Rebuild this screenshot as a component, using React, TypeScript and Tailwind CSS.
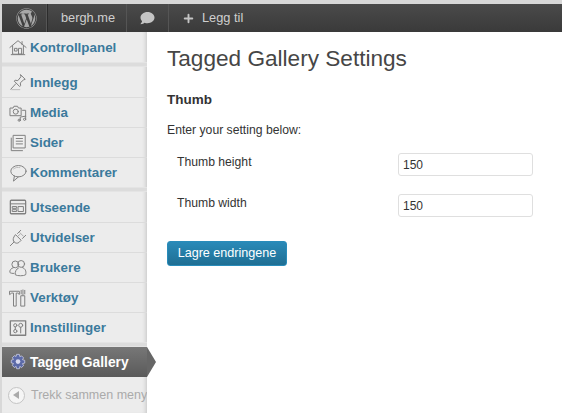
import type { ReactNode } from "react";
import { FaWordpress, FaComment } from "react-icons/fa";
import { Plus } from "lucide-react";

const stroke = {
  fill: "none",
  stroke: "#808080",
  strokeWidth: 1.1,
  strokeLinejoin: "round" as const,
  strokeLinecap: "round" as const,
};

function MenuIcon({ children }: { children: ReactNode }) {
  return (
    <svg viewBox="0 0 20 20" className="h-[18px] w-[18px] shrink-0" {...stroke}>
      {children}
    </svg>
  );
}

const icons = {
  home: (
    <MenuIcon>
      <path d="M1 10.500 10 3l9 7.500M4 8.500V18h12V8.500M14.500 4v3.500M6.500 11.500h2.500v3H6.500zM11 11.500h3V18h-3z" />
      <path d="M2.500 18.500h15" />
    </MenuIcon>
  ),
  pin: (
    <MenuIcon>
      <path d="m13 2 5 5-2 .8-3.500 3.200.5 3-1.200 1-6-6 1-1 3 .5L13 4.500z" />
      <path d="m7.500 12-5.500 6" />
      <path d="M3 18.500h9" stroke="#bbb" />
    </MenuIcon>
  ),
  media: (
    <MenuIcon>
      <path d="M1.500 4.500h3l1-2h4l1 2h3v8.500h-12z" />
      <circle cx="7.500" cy="8.500" r="2.800" />
      <path d="M15 7h3.500v7M12.500 18.500v-4l6-1v4" />
      <circle cx="11.300" cy="18" r="1.200" />
      <circle cx="17.300" cy="17" r="1.200" />
    </MenuIcon>
  ),
  pages: (
    <MenuIcon>
      <path d="M5 1.500h13v14H5z" fill="#efefef" />
      <path d="M2.500 4.500v14H15" />
      <path d="M8 5h7M8 8h7M8 11h7" />
    </MenuIcon>
  ),
  comments: (
    <MenuIcon>
      <ellipse cx="10.500" cy="8" rx="8.500" ry="6.300" />
      <path d="M6 13.500 5 19l5.500-4.700" />
      <path d="M5 5.500c2-1.800 5-2 7-1.500" stroke="#bbb" />
    </MenuIcon>
  ),
  appearance: (
    <MenuIcon>
      <rect x="1.500" y="2.500" width="17" height="15" rx="1" strokeWidth="1.400" />
      <path d="M1.500 6.500h17M4 9.500h4.500v2H4zM4 13h4.500v2H4zM10.500 9.500H16V15h-5.500z" />
    </MenuIcon>
  ),
  plugins: (
    <MenuIcon>
      <path d="m7.500 6.500 6 6-2.500 2.500c-2 1.300-4 .8-5.200-.5s-1.600-3.200-.6-5.200zM5.500 14.500 1.500 18.500M9.500 5l3.500-3.500M15 10.500 18.500 7" />
      <path d="m12 4 4 4M10 8l2-2" stroke="#aaa" />
    </MenuIcon>
  ),
  users: (
    <MenuIcon>
      <circle cx="7" cy="6" r="3.800" />
      <circle cx="13.500" cy="5.500" r="3.800" />
      <path d="M5 9.500c-3 1-4.500 3-4 5.500 1 .8 3 1.200 4.500 1M15 9.500c3 1 4.500 4 3.500 8-2 1.500-9.500 1.500-11.500 0-.6-3 1-6.500 3.500-7.500" />
    </MenuIcon>
  ),
  tools: (
    <MenuIcon>
      <path d="M1 2.500h10.500v3.500l-2-1.500H8V19H5V4.500H3l-2 1.500z" />
      <path d="M15.500 1v6M13.500 7.500h4V19h-4z" />
      <path d="M13.500 1.500v4M17.500 1.500v4" />
    </MenuIcon>
  ),
  settings: (
    <MenuIcon>
      <rect x="1.500" y="2" width="17" height="16" strokeWidth="1.500" />
      <circle cx="7" cy="7" r="1.800" />
      <circle cx="7" cy="13.500" r="1.800" />
      <path d="M7 8.800v2.900" />
      <circle cx="13" cy="7" r="2.200" />
      <path d="M13 9.200V15.500" />
    </MenuIcon>
  ),
};

const groups = [
  [{ label: "Kontrollpanel", icon: icons.home }],
  [
    { label: "Innlegg", icon: icons.pin },
    { label: "Media", icon: icons.media },
    { label: "Sider", icon: icons.pages },
    { label: "Kommentarer", icon: icons.comments },
  ],
  [
    { label: "Utseende", icon: icons.appearance },
    { label: "Utvidelser", icon: icons.plugins },
    { label: "Brukere", icon: icons.users },
    { label: "Verktøy", icon: icons.tools },
    { label: "Innstillinger", icon: icons.settings },
  ],
];

function Separator() {
  return <div className="h-[5px] border-y border-[#e4e4e4] bg-[#dcdcdc]" />;
}

function SettingRow({ label }: { label: string }) {
  return (
    <div className="flex items-start">
      <div className="w-[231px] pl-[10px] pt-[1px] text-[12.2px] leading-[16px]">{label}</div>
      <input
        readOnly
        value="150"
        className="h-[23px] w-[135px] rounded-[3px] border border-[#dfdfdf] bg-white px-[4px] text-[12px] text-[#333] outline-none"
      />
    </div>
  );
}

export default function App() {
  return (
    <div className="flex h-[413px] w-[562px] flex-col overflow-hidden bg-[#d8d8d8] pt-[4px] pl-[2px] font-['Liberation_Sans',Arial,sans-serif]">
      {/* Admin bar */}
      <header className="flex h-[28px] shrink-0 bg-gradient-to-b from-[#4a4a4a] to-[#3a3a3a] text-[12.8px] text-[#cfcfcf]">
        <div className="flex w-[45px] items-center justify-center border-r border-[#555]">
          <FaWordpress className="ml-[4px] h-[21px] w-[21px] text-[#a8a8a8]" />
        </div>
        <div className="flex w-[80px] items-center justify-center border-x border-x-[#2c2c2c] border-r-[#555] pl-[2px]">bergh.me</div>
        <div className="flex w-[42px] items-center justify-center border-r border-[#555]">
          <FaComment className="h-[14px] w-[15px] text-[#c4c4c4]" />
        </div>
        <div className="flex items-center gap-[7px] pl-[13px]">
          <Plus className="h-[13px] w-[13px] text-[#c4c4c4]" strokeWidth={3.5} />
          Legg til
        </div>
        <div className="flex-1" />
      </header>

      <div className="flex min-h-0 flex-1">
        {/* Side menu */}
        <aside className="w-[145px] shrink-0 bg-[#ececec] shadow-[inset_-4px_0_4px_-3px_#c4c4c4]">
          {groups.map((group, i) => (
            <div key={i}>
              {group.map((item, j) => (
                <div
                  key={item.label}
                  className={
                    "flex h-[30px] items-center gap-[4px] pl-[7px] text-[13.4px] font-bold text-[#3b7a9c] " +
                    (j > 0 ? "border-t border-[#dcdcdc]" : "")
                  }
                >
                  {item.icon}
                  <span className="-ml-px pt-[2px]">{item.label}</span>
                </div>
              ))}
              <Separator />
            </div>
          ))}
          <div className="relative flex h-[30px] items-center gap-[3px] bg-gradient-to-b from-[#777] to-[#5a5a5a] pl-[7px] text-[13.8px] font-bold text-white">
            <svg viewBox="0 0 20 20" className="h-[18px] w-[18px] shrink-0">
              <path
                d="M8.500 1.500h3l.5 2.500 2-.8 2.200 2.200-1.200 2 2.500.8v3l-2.500.6 1.200 2.200-2.200 2.100-2-1.200-.5 2.600h-3l-.6-2.600-2 1.200L3.700 13.800l1.200-2.200-2.400-.6V8l2.400-.8-1.200-2 2.200-2.200 2 .8z"
                fill="#5c6aa8"
                stroke="#d8daf0"
                strokeWidth="0.800"
              />
              <circle cx="10" cy="9.500" r="2.600" fill="#d8daf0" />
            </svg>
            <span className="pt-[2px]">Tagged Gallery</span>
            <span className="absolute left-full top-0 h-0 w-0 border-y-[15px] border-l-[9px] border-y-transparent border-l-[#666]" />
          </div>
          <div className="flex h-[36px] items-center gap-[6px] overflow-hidden whitespace-nowrap pl-[6px] text-[12.5px] text-[#aaa]">
            <span className="flex h-[17px] w-[17px] shrink-0 items-center justify-center rounded-full border border-[#c4c4c4] bg-[#f5f5f5]">
              <span className="mr-[2px] h-0 w-0 border-y-[4px] border-r-[6px] border-y-transparent border-r-[#aaa]" />
            </span>
            Trekk sammen meny
          </div>
        </aside>

        {/* Settings form */}
        <main className="flex-1 bg-white pl-[20px] text-[#333]">
          <h2 className="mt-[12px] text-[22.6px] leading-[29px] text-[#464646]">Tagged Gallery Settings</h2>
          <h3 className="mt-[19px] text-[13.5px] leading-[16px] font-bold">Thumb</h3>
          <p className="mt-[14px] text-[12.2px] leading-[16px]">Enter your setting below:</p>
          <div className="mt-[15px] flex flex-col gap-[18px]">
            <SettingRow label="Thumb height" />
            <SettingRow label="Thumb width" />
          </div>
          <button className="mt-[24px] h-[25px] w-[120px] rounded-[3px] border border-[#298cba] bg-gradient-to-b from-[#2a8ab8] to-[#1f6f94] text-[12.6px] text-white">
            Lagre endringene
          </button>
        </main>
      </div>
    </div>
  );
}
